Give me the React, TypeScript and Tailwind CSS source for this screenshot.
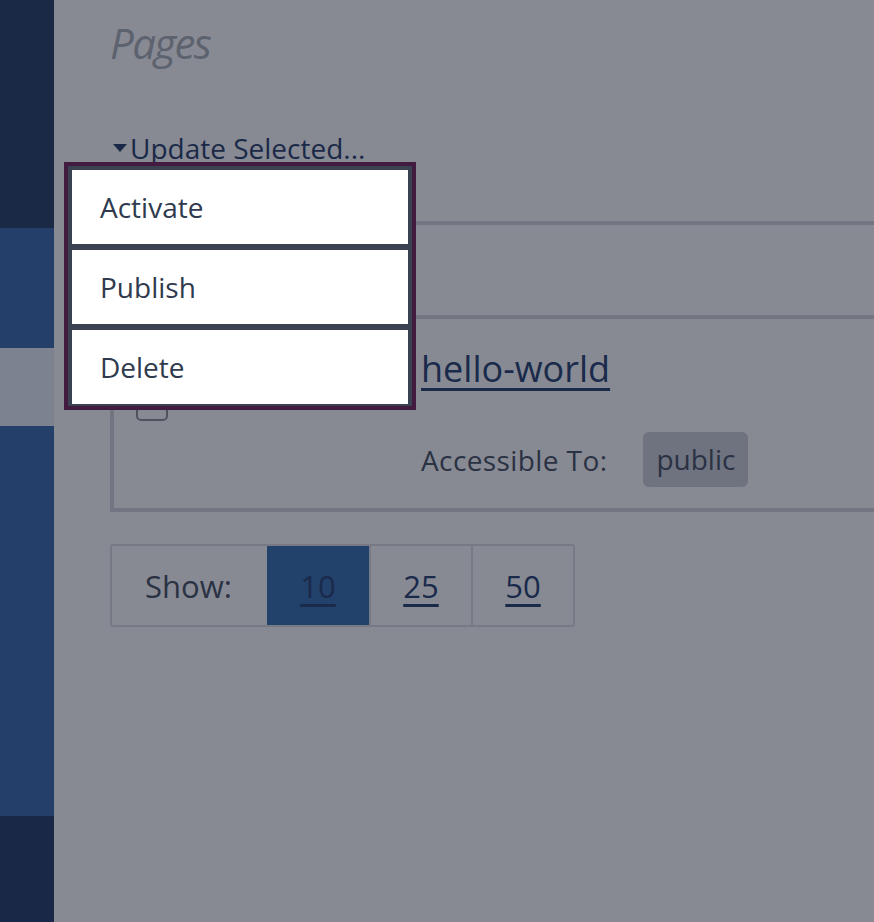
import React from 'react';

const font = { fontFamily: '"Open Sans", "Liberation Sans", sans-serif' };

export default function App() {
    return (
        <div className="flex w-[874px] h-[922px] overflow-hidden bg-[#878a93]" style={font}>
            {/* Sidebar */}
            <div className="w-[54px] shrink-0 flex flex-col">
                <div className="h-[228px] bg-[#1a2946]" />
                <div className="h-[120px] bg-[#243f69]" />
                <div className="h-[78px] bg-[#7d8290]" />
                <div className="h-[390px] bg-[#243f69]" />
                <div className="flex-1 bg-[#182846]" />
            </div>

            {/* Main */}
            <div className="flex-1 pl-[56px] min-w-0">
                <h1 className="mt-[18px] text-[42px] leading-[50px] italic font-normal tracking-[-1.6px] text-[#5d626f]">Pages</h1>

                <div className="relative mt-[61px] flex items-center h-[38px]">
                    <svg width="18" height="12" viewBox="0 0 18 12" className="ml-[1px] mr-[1px]">
                        <path d="M2 2 L16 2 L9 10 Z" fill="#1b2948" />
                    </svg>
                    <span className="text-[28px] leading-[38px] text-[#1b2948]">Update Selected...</span>

                    {/* Dropdown */}
                    <div className="absolute z-10 top-[33px] left-[-46px] w-[352px] border-4 border-[#431a40] bg-[#3a4252] pt-[4px] px-[4px] pb-[2px] flex flex-col gap-[6px]">
                        {['Activate', 'Publish', 'Delete'].map((label) => (
                            <div key={label} className="h-[74px] bg-white pl-[28px] text-[28px] leading-[74px] text-[#2f3a4e]">
                                {label}
                            </div>
                        ))}
                    </div>
                </div>

                {/* Table */}
                <div className="mt-[54px] w-[820px] border-4 border-[#737682]">
                    <div className="h-[94px] border-b-4 border-[#737682]" />
                    <div className="h-[189px] flex">
                        <div className="ml-[22px] mt-[70px] w-[32px] h-[32px] border-2 border-[#4f535e] rounded-[5px]" />
                        <div className="ml-[253px] flex flex-col">
                            <a className="mt-[28px] text-[36px] leading-[44px] text-[#1a2a4b] underline decoration-[3px] underline-offset-[6px]">hello-world</a>
                            <div className="mt-[41px] flex items-center">
                                <span className="text-[28px] leading-[38px] tracking-[0.4px] text-[#2a3243]">Accessible To:</span>
                                <span className="ml-[36px] h-[55px] px-[13px] rounded-[6px] bg-[#6f7380] text-[28px] leading-[55px] text-[#2a3243]">public</span>
                            </div>
                        </div>
                    </div>
                </div>

                {/* Pagination */}
                <div className="mt-[32px] w-[465px] h-[83px] flex border-2 border-[#777a85] rounded-[3px] text-[31px] leading-[40px]">
                    <div className="w-[155px] pl-[33px] flex items-center text-[#2a3243]">Show:</div>
                    <div className="w-[102px] flex items-center justify-center bg-[#22416b]">
                        <a className="text-[#1a2a4b] underline decoration-[3px] underline-offset-[6px]">10</a>
                    </div>
                    <div className="w-[102px] border-l-2 border-[#777a85] flex items-center justify-center">
                        <a className="text-[#1a2a4b] underline decoration-[3px] underline-offset-[6px]">25</a>
                    </div>
                    <div className="flex-1 border-l-2 border-[#777a85] flex items-center justify-center">
                        <a className="text-[#1a2a4b] underline decoration-[3px] underline-offset-[6px]">50</a>
                    </div>
                </div>
            </div>
        </div>
    );
}
